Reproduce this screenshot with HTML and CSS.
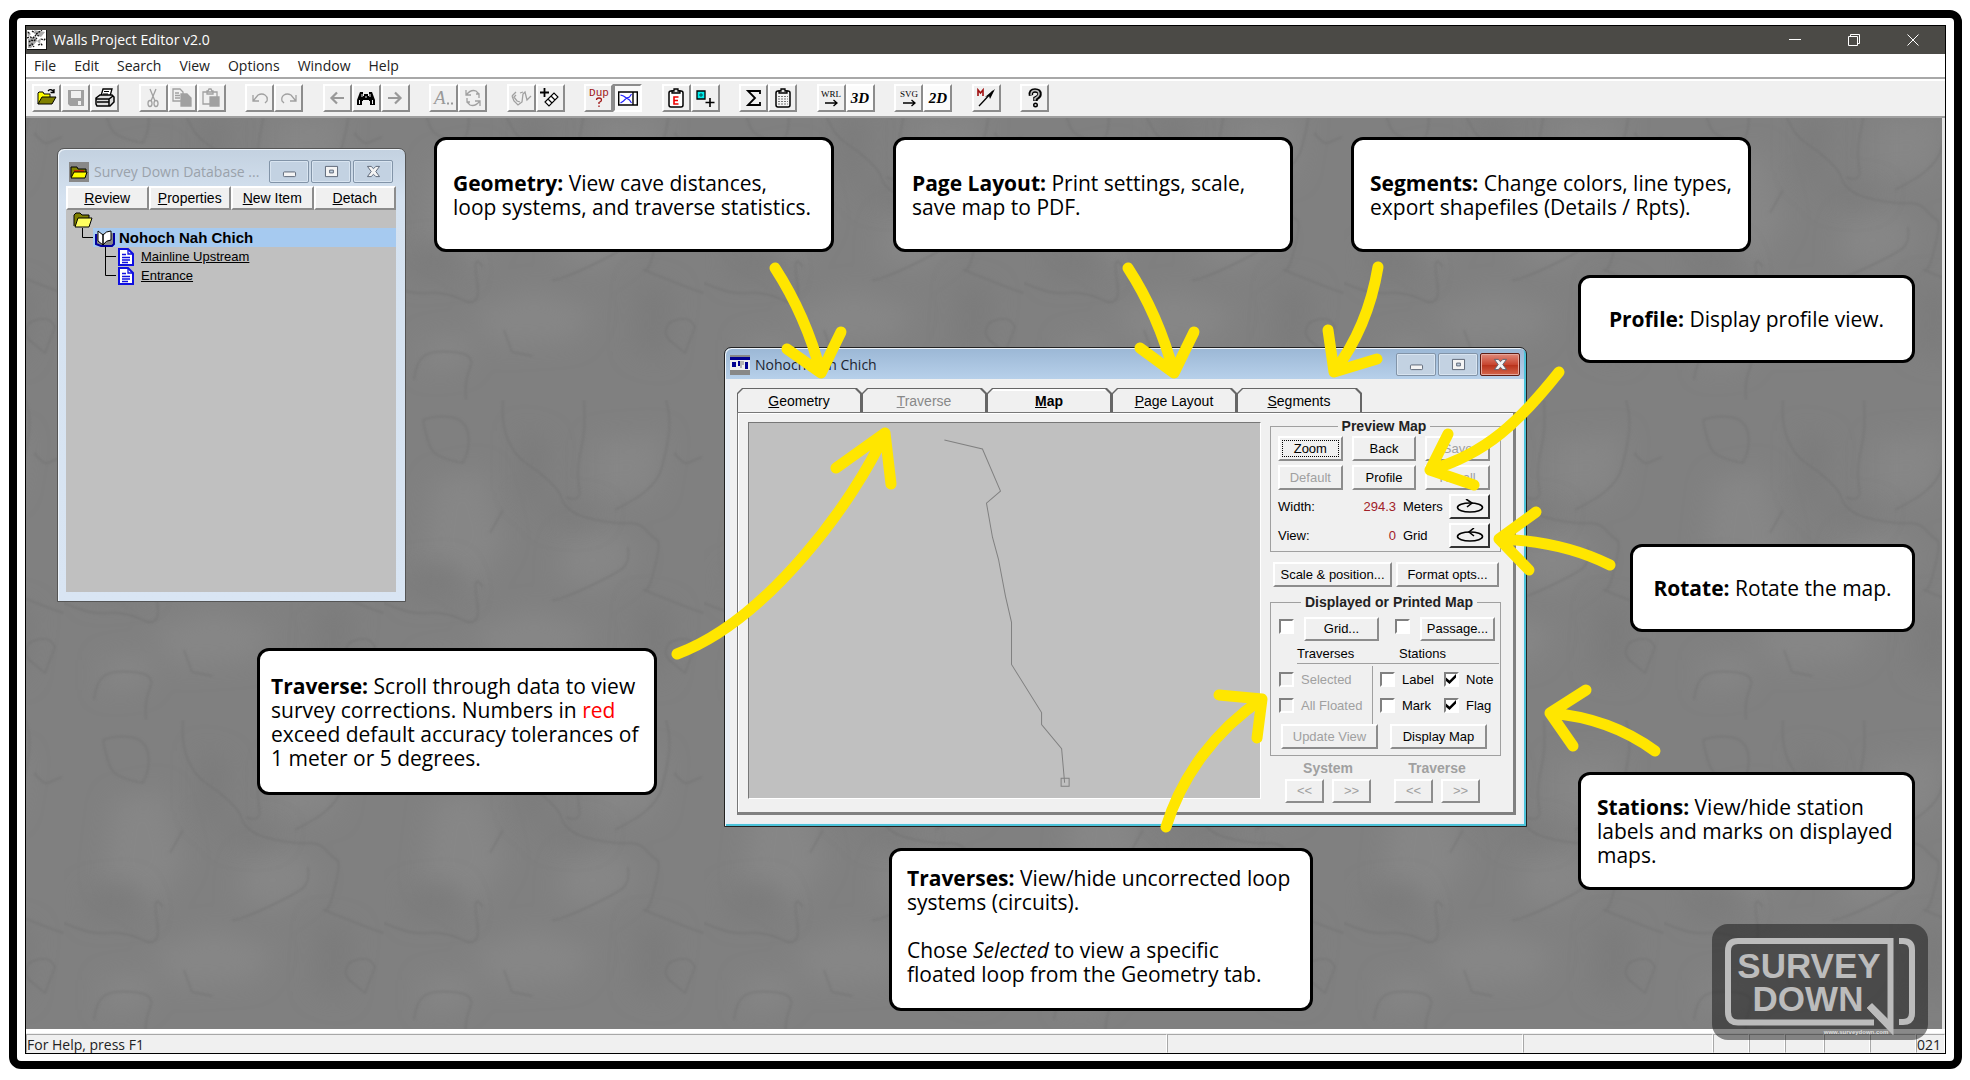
FILE: index.html
```html
<!DOCTYPE html>
<html lang="en">
<head>
<meta charset="utf-8">
<title>Walls Project Editor v2.0</title>
<link rel="stylesheet" href="styles.css">
</head>
<body>
<div class="frame">
<div class="app">
  <header class="titlebar">
    <svg class="app-icon" viewBox="0 0 20 20"><rect width="20" height="20" fill="#fff"/><path d="M0 1l4 3-3 3zM7 0l5 1 6 1-4 5-5-2zM1 9l8-3 1 5-6 7H1zM10 11l4-3-1 6z" fill="#aaa"/><path d="M0 8l3-1 3 1 3-3 3 1M1 2l2 2M5 1l3 2M9 4l6-4M2 12l2-2 3 1 3-3M2 16l3-2 2 3M11 15l3-1 2 2M14 9l3 1 2-2" fill="none" stroke="#111" stroke-width="1.3" stroke-dasharray="2 1"/><path d="M0 19.500h20M19.500 0v20" stroke="#111"/></svg>
    <h1>Walls Project Editor v2.0</h1>
    <div class="sysbuttons">
      <button aria-label="Minimize"><svg viewBox="0 0 12 12"><path d="M0 5.500h12"/></svg></button>
      <button aria-label="Restore"><svg viewBox="0 0 12 12"><path d="M.5 2.500h9v9h-9zM2.500 2.500v-2h9v9h-2"/></svg></button>
      <button aria-label="Close"><svg viewBox="0 0 12 12"><path d="M.5.5l11 11M11.500.5l-11 11"/></svg></button>
    </div>
  </header>

  <nav class="menubar">
    <button>File</button><button>Edit</button><button>Search</button><button>View</button><button>Options</button><button>Window</button><button>Help</button>
  </nav>

  <div class="toolbar">
    <div class="tools">
      <div class="group">
        <button aria-label="Open"><svg viewBox="0 0 20 20"><path d="M1 16V5l1-1h4l1 2h6v3" fill="#ff0" stroke="#000"/><path d="M1 16l4-7h14l-4 7z" fill="#808000" stroke="#000"/><path d="M11 3q3-3 6 1M17 1v3.500h-3.500" fill="none" stroke="#000" stroke-width="1.300"/></svg></button>
        <button aria-label="Save" disabled><svg viewBox="0 0 20 20"><path d="M2 2h16v16H4l-2-2z" fill="#a0a0a0"/><path d="M5 3h10v7H5zM12 13h3v4h-3z" fill="#f0f0f0"/></svg></button>
        <button aria-label="Print"><svg viewBox="0 0 20 20"><path d="M6 8l2-7h9l-2 7z" fill="#fff" stroke="#000" stroke-width="1.300"/><path d="M9 3.500h5M8 6h5" stroke="#000"/><path d="M1 10l4-3h12l2 2v5l-4 4H2l-1-2z" fill="#ddd" stroke="#000" stroke-width="1.500"/><path d="M1 11h13l4-3M2 14h12M14 11v7" fill="none" stroke="#000" stroke-width="1.500"/></svg></button>
      </div>
      <div class="group">
        <button aria-label="Cut" disabled><svg viewBox="0 0 20 20" class="line"><path d="M7 1l5 12M13 1L8 13"/><ellipse cx="7" cy="15.500" rx="2" ry="3"/><ellipse cx="13" cy="15.500" rx="2" ry="3"/></svg></button>
        <button aria-label="Copy" disabled><svg viewBox="0 0 20 20" class="line"><path d="M1 1h7l3 3v9H1zM3 5h4M3 7.500h5M3 10h5"/><path d="M9 6h6l4 4v8H9z" fill="#a0a0a0"/></svg></button>
        <button aria-label="Paste" disabled><svg viewBox="0 0 20 20" class="line"><path d="M9 16H2V4h14v5M6 6V3h1l1-2h2l1 2h1v3z"/><path d="M9 9h9v9H9z" fill="#a0a0a0"/></svg></button>
      </div>
      <div class="group">
        <button aria-label="Undo" disabled><svg viewBox="0 0 20 20" class="line"><path d="M3 7v6h6M3.500 12.500L8 7q4-2 7 0t2 6l-2 2"/></svg></button>
        <button aria-label="Redo" disabled><svg viewBox="0 0 20 20" class="line"><path d="M17 7v6h-6M16.500 12.500L12 7q-4-2-7 0t-2 6l2 2"/></svg></button>
      </div>
      <div class="group">
        <button aria-label="Find previous" disabled><svg viewBox="0 0 20 20"><path d="M17 10H5M10 4.500L4.500 10l5.500 5.500" fill="none" stroke="#999" stroke-width="2.200"/></svg></button>
        <button aria-label="Find"><svg viewBox="0 0 20 20"><path d="M4 4h3v4h1V6h4v2h1V4h3l3 8v5h-5v-4h-1v-1H7v1H6v4H1v-5z" fill="#000"/><path d="M3.500 12v4M6 6v3M14 6v3M16.500 12v4M10 8v2" stroke="#eee"/></svg></button>
        <button aria-label="Find next" disabled><svg viewBox="0 0 20 20"><path d="M3 10h12M10 4.500l5.500 5.500-5.500 5.500" fill="none" stroke="#999" stroke-width="2.200"/></svg></button>
      </div>
      <div class="group">
        <button aria-label="Font" disabled><svg viewBox="0 0 20 20"><text x="0" y="16" class="italic" font-size="19" fill="#999">A</text><path d="M13 15.500h2M17 15.500h2" stroke="#999" stroke-width="2"/></svg></button>
        <button aria-label="Refresh" disabled><svg viewBox="0 0 20 20" class="line"><path d="M3 2v5h5M3.500 6.500Q8 1 13 3l3 3M17 18v-5h-5M16.500 13.500Q12 19 7 17l-3-3M4 10v4h3M16 10V6h-3"/></svg></button>
      </div>
      <div class="group">
        <button aria-label="Traverse line" disabled><svg viewBox="0 0 20 20" class="line"><path d="M1 8l4-4M1 8l2 5 4 4 4-3 1-8 2-2 2 8 4-4M5 7l-2 2 3 4 3 1M9 5l3-1"/></svg></button>
        <button aria-label="Measure"><svg viewBox="0 0 20 20"><path d="M4.500 0v9M0 4.500h9" stroke="#000" stroke-width="1.800"/><path d="M5 14l9-9 4 4-9 9zM8 11l4 4M11 8l4 4" fill="#fff" stroke="#000" stroke-width="1.100"/></svg></button>
      </div>
      <div class="group">
        <button aria-label="Find duplicates"><svg viewBox="0 0 20 20"><text x="10" y="8" text-anchor="middle" class="mono" font-size="11" fill="#a01818">Dup</text><path d="M7.500 12q0-2 2.500-2t2.500 2q0 1.500-2.500 2.500v1.500M10 17.500v1.500" fill="none" stroke="#a01818" stroke-width="1.300"/></svg></button>
        <button aria-label="Map frame" aria-pressed="true" class="pressed"><svg viewBox="0 0 20 20"><path d="M.7 4h18.600v13H.7zM15 4v13" fill="#fff" stroke="#000" stroke-width="1.400"/><path d="M2.500 7l3 1 3 2 3-1 2-3M2.500 15l3-2 3-3 3 2 2 3" fill="none" stroke="#22f" stroke-width="1.200"/></svg></button>
      </div>
      <div class="group">
        <button aria-label="Errors"><svg viewBox="0 0 20 20"><rect x="3" y="3" width="14" height="16" rx="2" fill="#fff" stroke="#000" stroke-width="1.500"/><path d="M6 5V3h2V1h4v2h2v2z" fill="#ddd" stroke="#000" stroke-width="1.300"/><path d="M12.500 9H8v7h4.500M8 12.500h4" fill="none" stroke="#e00" stroke-width="1.600"/></svg></button>
        <button aria-label="Add point"><svg viewBox="0 0 20 20"><path d="M2 3h8v8H2z" fill="#0ee" stroke="#000" stroke-width="1.300"/><path d="M5 6h2v2H5z" fill="none" stroke="#055"/><path d="M15 10v9M10.500 14.500h9" stroke="#000" stroke-width="1.600"/></svg></button>
      </div>
      <div class="group">
        <button aria-label="Statistics"><svg viewBox="0 0 20 20"><path d="M16 6V3H4l7 7-7 7h12v-3" fill="none" stroke="#000" stroke-width="1.800"/></svg></button>
        <button aria-label="Report"><svg viewBox="0 0 20 20"><rect x="3" y="3" width="14" height="16" rx="2" fill="#f4f4f4" stroke="#000" stroke-width="1.500"/><path d="M6 5V3h2V1h4v2h2v2z" fill="#ddd" stroke="#000" stroke-width="1.300"/><path d="M5 8.500h10M5 11h10M5 13.500h10M5 16h10" stroke="#777" stroke-dasharray="2 1"/></svg></button>
      </div>
      <div class="group">
        <button aria-label="Export WRL"><svg viewBox="0 0 20 20"><text x="10" y="9" text-anchor="middle" class="roman" font-size="9">WRL</text><path d="M4 15h12M12.500 12l3.500 3-3.500 3" fill="none" stroke="#000" stroke-width="1.300"/></svg></button>
        <button aria-label="View 3D" class="white"><svg viewBox="0 0 20 20"><text x="10" y="15" text-anchor="middle" class="serif" font-size="15">3D</text></svg></button>
      </div>
      <div class="group">
        <button aria-label="Export SVG"><svg viewBox="0 0 20 20"><text x="10" y="9" text-anchor="middle" class="roman" font-size="9">SVG</text><path d="M4 15h12M12.500 12l3.500 3-3.500 3" fill="none" stroke="#000" stroke-width="1.300"/></svg></button>
        <button aria-label="View 2D" class="white"><svg viewBox="0 0 20 20"><text x="10" y="15" text-anchor="middle" class="serif" font-size="15">2D</text></svg></button>
      </div>
      <div class="group">
        <button aria-label="Magnetic declination"><svg viewBox="0 0 20 20"><path d="M2 8V2l2.500 3L7 2v6" fill="none" stroke="#a01010" stroke-width="1.600"/><path d="M3 18L17 3" stroke="#000" stroke-width="1.300"/><path d="M19 1l-5 10-1-3-4 1z" fill="#000"/></svg></button>
      </div>
      <div class="group">
        <button aria-label="Help"><svg viewBox="0 0 20 20"><path d="M6 7.500q-1-5 4-5t4.500 4q0 2-4 4v2.500" fill="none" stroke="#000" stroke-width="4.500"/><path d="M6 7q0-4.500 4-4.500t4 3.500q0 2-4 4.500v2" fill="none" stroke="#bbb" stroke-width="1.600"/><circle cx="10.500" cy="17" r="1.800" fill="#ccc" stroke="#000" stroke-width="1.400"/></svg></button>
      </div>
    </div>
  </div>

  <main class="desktop">
    <svg class="texture" aria-hidden="true">
      <defs>
        <filter id="soft"><feGaussianBlur stdDeviation="1"/></filter>
        <filter id="cloud" x="-50%" y="-50%" width="200%" height="200%"><feGaussianBlur stdDeviation="12"/></filter>
        <pattern id="marble" patternUnits="userSpaceOnUse" x="38" y="-38" width="320" height="320">
          <rect width="320" height="320" fill="#808080"/>
          <g fill="#868686" filter="url(#cloud)">
            <path d="M50 80l50-10 20 70-30 50-50-30zM210 40l70-5-10 60-60 5zM90 230l60-20 60 20-20 30-80 5zM180 140l50-10 25 30-40 30-40-10zM40 260l50-5-10 30-40 5z"/>
          </g>
          <g fill="#7c7c7c" filter="url(#cloud)">
            <path d="M20 170l50-5 15 30-60 5zM135 30l30 10-10 70-20-20zM255 200l35 10-10 70-30-10zM160 100l60 10-20 15-40-5z"/>
          </g>
          <g fill="none" stroke="#707070" stroke-width="2" stroke-linejoin="round" filter="url(#soft)" opacity=".5">
            <path d="M39 20q4 22 9 30t31 13q8-16 5-30t-18-16-27 3"/>
            <path d="M119 0q-2 24 5 40t18 23 22 17 13 17 9 13 27 10 31 3 18 7 11 10-2 27-11 23 25 10 35 13"/>
            <path d="M200 0q2 30-3 50t-2 37-13 10"/>
            <path d="M0 203q26 12 43 10t36 7 14-20 6-13M106 133l13-23M282 0q5 18 3 33t-7 34-29 33-14 7"/>
            <path d="M244 147q2 14-4 20t-36 20-36 13M290 53q10 12 14 10t14-6"/>
            <path d="M289 263q-12-8-4-20 20-10 26 4l-10 26zM30 300q2-18 10-24t30-4 16 16-4 32M120 250l8 22 20 4"/>
          </g>
        </pattern>
      </defs>
      <rect width="100%" height="100%" fill="url(#marble)"/>
    </svg>

    <section class="window database" aria-label="Survey Down Database">
      <div class="caption">
        <svg class="win-icon" viewBox="0 0 20 20"><rect width="20" height="20" fill="#888"/><path d="M2 15V5h6l1 2h8v3" fill="#808000" stroke="#000"/><path d="M5 8h10v2H5z" fill="#c03000"/><path d="M2 16l3-6h13l-2 6z" fill="#ff0" stroke="#000"/></svg>
        <h2>Survey Down Database ...</h2>
        <div class="winbuttons">
          <button aria-label="Minimize"><svg viewBox="0 0 16 14"><rect x="1.500" y="7.500" width="13" height="5" rx="1"/></svg></button>
          <button aria-label="Maximize"><svg viewBox="0 0 16 14"><path fill-rule="evenodd" d="M1.500 1.500h13v11h-13zM6 5.500v3h4v-3z"/></svg></button>
          <button aria-label="Close"><svg viewBox="0 0 16 14"><path d="M1.500 1.500H5.500L8 4l2.500-2.500h4L10.500 7l4 5.500h-4L8 10l-2.500 2.500h-4L5.500 7z"/></svg></button>
        </div>
      </div>
      <div class="actions">
        <button><u>R</u>eview</button><button><u>P</u>roperties</button><button><u>N</u>ew Item</button><button><u>D</u>etach</button>
      </div>
      <div class="tree">
        <div class="row root"><svg class="folder" viewBox="0 0 20 16"><path d="M1 14V3l2-2h4l2 2h7v4" fill="#808000" stroke="#000"/><path d="M2 15L5 6h14l-3 9z" fill="#ffff60" stroke="#000"/></svg></div>
        <div class="row book">
          <svg class="elbow" viewBox="0 0 11 19"><path d="M.5 0v9.500H11"/></svg>
          <div class="selected"><svg viewBox="0 0 20 18"><path d="M1 5v10l5 2h11l2-2V4" fill="#888" stroke="#0000a0" stroke-width="2"/><path d="M3 2l5 4v10l-5-4zM8 6q3-4 8-4v9q-5 0-8 5z" fill="#fff" stroke="#000"/></svg><strong>Nohoch Nah Chich</strong></div>
        </div>
        <div class="row leaf"><svg class="elbow" viewBox="0 0 11 19"><path d="M.5 0v19M0 9.500h11"/></svg><svg class="doc" viewBox="0 0 16 18"><path d="M1 1h9l5 5v11H1z" fill="#fff" stroke="#1010e0" stroke-width="2"/><path d="M10 1v5h5M4 6.500h4M4 9.500h8M4 12h8M4 14.500h6" fill="none" stroke="#1010e0" stroke-width="1.300"/></svg><a href="#">Mainline Upstream</a></div>
        <div class="row leaf"><svg class="elbow" viewBox="0 0 11 19"><path d="M.5 0v9.500H11"/></svg><svg class="doc" viewBox="0 0 16 18"><path d="M1 1h9l5 5v11H1z" fill="#fff" stroke="#1010e0" stroke-width="2"/><path d="M10 1v5h5M4 6.500h4M4 9.500h8M4 12h8M4 14.500h6" fill="none" stroke="#1010e0" stroke-width="1.300"/></svg><a href="#">Entrance</a></div>
      </div>
    </section>

    <section class="window review" aria-label="Nohoch Nah Chich">
      <div class="caption">
        <svg class="win-icon" viewBox="0 0 20 20"><rect width="20" height="20" fill="#eee"/><path d="M0 0h20v2H0zM0 15h20v5H0z" fill="#888"/><path d="M0 2h20v3H0zM2 7h4v5H2zM8 6h2v5H8zM15 7h3v7h-3z" fill="#000090"/><path d="M11 6v7M13 6v4" stroke="#777"/></svg>
        <h2>Nohoch Nah Chich</h2>
        <div class="winbuttons">
          <button aria-label="Minimize"><svg viewBox="0 0 16 14"><rect x="1.500" y="7.500" width="13" height="5" rx="1"/></svg></button>
          <button aria-label="Maximize"><svg viewBox="0 0 16 14"><path fill-rule="evenodd" d="M1.500 1.500h13v11h-13zM6 5.500v3h4v-3z"/></svg></button>
          <button aria-label="Close" class="close"><svg viewBox="0 0 16 14"><path d="M1.500 1.500H5.500L8 4l2.500-2.500h4L10.500 7l4 5.500h-4L8 10l-2.500 2.500h-4L5.500 7z"/></svg></button>
        </div>
      </div>
      <div class="client">
        <div class="tabs" role="tablist">
          <button role="tab"><span><u>G</u>eometry</span></button>
          <button role="tab" disabled><span><u>T</u>raverse</span></button>
          <button role="tab" aria-selected="true" class="active"><span><u>M</u>ap</span></button>
          <button role="tab"><span><u>P</u>age Layout</span></button>
          <button role="tab"><span><u>S</u>egments</span></button>
        </div>
        <div class="panel">
          <div class="map">
            <svg viewBox="0 0 510 374" preserveAspectRatio="xMinYMin"><path d="M195 17l38 9 18 42-14 12 6 34 6 22 7 37 6 26v42l30 48v12l20 24 3 34M311.500 354.500h8v8h-8z" fill="none" stroke="#808080"/></svg>
          </div>
          <div class="side">
            <fieldset class="preview">
              <legend>Preview Map</legend>
              <div class="three">
                <button class="focus">Zoom</button><button>Back</button><button disabled>Save</button>
                <button disabled>Default</button><button>Profile</button><button disabled>Recall</button>
              </div>
              <div class="measure"><span>Width:</span><output>294.3</output><span>Meters</span>
                <button aria-label="Rotate clockwise"><svg viewBox="0 0 28 16"><ellipse cx="14" cy="8.500" rx="12.500" ry="4.500"/><path d="M10 0l6 4-5 4"/></svg></button></div>
              <div class="measure"><span>View:</span><output>0</output><span>Grid</span>
                <button aria-label="Rotate counterclockwise"><svg viewBox="0 0 28 16"><ellipse cx="14" cy="8.500" rx="12.500" ry="4.500"/><path d="M18 0l-5 4 5 4"/></svg></button></div>
            </fieldset>
            <div class="options"><button>Scale &amp; position...</button><button>Format opts...</button></div>
            <fieldset class="printed">
              <legend>Displayed or Printed Map</legend>
              <div class="items">
                <input type="checkbox" aria-label="Show grid"><button>Grid...</button>
                <input type="checkbox" aria-label="Show passage"><button>Passage...</button>
              </div>
              <div class="heads"><span>Traverses</span><span>Stations</span></div>
              <div class="checks">
                <div class="floats">
                  <label><input type="checkbox" disabled>Selected</label>
                  <label><input type="checkbox" disabled>All Floated</label>
                </div>
                <div class="stations">
                  <label><input type="checkbox">Label</label><label><input type="checkbox" checked>Note</label>
                  <label><input type="checkbox">Mark</label><label><input type="checkbox" checked>Flag</label>
                </div>
              </div>
              <div class="commit"><button disabled>Update View</button><button>Display Map</button></div>
            </fieldset>
            <div class="steppers">
              <div><strong>System</strong><button disabled>&lt;&lt;</button><button disabled>&gt;&gt;</button></div>
              <div><strong>Traverse</strong><button disabled>&lt;&lt;</button><button disabled>&gt;&gt;</button></div>
            </div>
          </div>
        </div>
      </div>
    </section>

    <svg class="arrows" viewBox="26 118 1918 912" aria-hidden="true">
      <path d="M775 268Q806 316 821 373M787 349L821 373L841 332"/>
      <path d="M1128 268Q1158 314 1174 373M1140 348L1174 373L1194 332"/>
      <path d="M1378 267Q1368 327 1334 372M1328 330L1334 372L1377 359"/>
      <path d="M1559 372C1520 421 1486 454 1430 470M1448 434L1430 470L1474 485"/>
      <path d="M1610 565Q1562 541 1499 539M1536 512L1499 539L1529 570"/>
      <path d="M677 654C768 620 855 500 885 433M836 468L885 433L891 484"/>
      <path d="M1166 827C1182 775 1216 730 1262 699M1219 695L1262 699L1257 738"/>
      <path d="M1655 751Q1610 718 1550 713M1586 690L1550 713L1573 746"/>
    </svg>

    <aside class="note geometry"><p><b>Geometry:</b> View cave distances,<br>loop systems, and traverse statistics.</p></aside>
    <aside class="note layout"><p><b>Page Layout:</b> Print settings, scale,<br>save map to PDF.</p></aside>
    <aside class="note segments"><p><b>Segments:</b> Change colors, line types,<br>export shapefiles (Details / Rpts).</p></aside>
    <aside class="note profile"><p><b>Profile:</b> Display profile view.</p></aside>
    <aside class="note rotate"><p><b>Rotate:</b> Rotate the map.</p></aside>
    <aside class="note traverse"><p><b>Traverse:</b> Scroll through data to view<br>survey corrections. Numbers in <span class="red">red</span><br>exceed default accuracy tolerances of<br>1 meter or 5 degrees.</p></aside>
    <aside class="note traverses"><p><b>Traverses:</b> View/hide uncorrected loop<br>systems (circuits).</p><p>Chose <i>Selected</i> to view a specific<br>floated loop from the Geometry tab.</p></aside>
    <aside class="note stations-note"><p><b>Stations:</b> View/hide station<br>labels and marks on displayed<br>maps.</p></aside>
  </main>

  <footer class="statusbar">
    <span class="hint">For Help, press F1</span><span class="c1"></span><span class="c2"></span><span class="c3"></span><span class="c3"></span><span class="c4"></span><span class="c5"></span><span class="c5"></span><span class="c6">021</span>
  </footer>

  <svg class="logo" viewBox="0 0 216 116" role="img" aria-label="Survey Down">
    <rect width="216" height="116" rx="16" fill="#141414" fill-opacity=".5"/>
    <g fill="none" stroke="#bcbcbc" stroke-width="6">
      <path d="M162 98.500H26Q16 98.500 16 88V27Q16 17 26 17H178.500V104L157 82"/>
      <path d="M187 17h4q9 0 9 9v63q0 9-9 9h-4"/>
    </g>
    <path d="M155 84l5-5 21 21v11z" fill="#bcbcbc"/>
    <g fill="#bcbcbc" class="logotype"><text x="97" y="54" text-anchor="middle">SURVEY</text><text x="96" y="87" text-anchor="middle">DOWN</text></g>
    <text x="144" y="110" text-anchor="middle" class="site">www.surveydown.com</text>
  </svg>
</div>
</div>
</body>
</html>
```
FILE: styles.css
```css
* { box-sizing: border-box; }

body {
  margin: 0;
  min-height: 100vh;
  padding: 10px 8px 11px 9px;
  display: flex;
  background: #fff;
  color: #000;
  font: 14px/16px "Liberation Sans", Arial, sans-serif;
}

button, input { font: inherit; color: inherit; margin: 0; }
button { padding: 0; white-space: nowrap; }
h1, h2, p { margin: 0; font-weight: normal; }
svg { display: block; flex: none; }

.frame {
  flex: 1;
  display: flex;
  border: 8px solid #000;
  border-radius: 12px;
  padding: 7px 8px;
}

.app {
  position: relative;
  flex: 1;
  display: flex;
  flex-direction: column;
  border: 1px solid #000;
  background: #f0f0f0;
  overflow: hidden;
}

/* Main title bar, menu and toolbar */
.titlebar {
  display: flex;
  align-items: center;
  height: 28px;
  background: #4b4a46;
  color: #fff;
}
.app-icon { width: 20px; height: 20px; margin: 0 6px 0 1px; }
.titlebar h1 { flex: 1; font: 14px/20px "Open Sans", "Noto Sans", sans-serif; }
.sysbuttons { display: flex; padding-right: 3px; }
.sysbuttons button {
  display: flex;
  align-items: center;
  justify-content: center;
  width: 59px;
  height: 28px;
  border: 0;
  background: none;
}
.sysbuttons svg { width: 12px; height: 12px; fill: none; stroke: #fff; }

.menubar {
  display: flex;
  gap: 18px;
  height: 23px;
  padding-left: 8px;
  background: #fff;
}
.menubar button {
  border: 0;
  background: none;
  color: #222;
  font: 14px/24px "Open Sans", "Noto Sans", sans-serif;
}

.toolbar {
  height: 41px;
  padding: 5px 6px;
  border-top: 2px solid #a8a8a8;
  border-bottom: 2px solid #a0a0a0;
  box-shadow: inset 0 2px #fff;
}
.tools { display: flex; justify-content: space-between; width: 1017px; }
.group { display: flex; }
.tools button {
  display: flex;
  align-items: center;
  justify-content: center;
  width: 29px;
  height: 28px;
  border: 2px solid;
  border-color: #fff #8c8c8c #8c8c8c #fff;
  background: #f0f0f0;
}
.tools button.pressed { border-color: #8c8c8c #fff #fff #8c8c8c; background: #f8f8f8; }
.tools button.white { background: #fcfcfc; }
.tools svg { width: 20px; height: 20px; overflow: visible; }
.line { fill: none; stroke: #a0a0a0; stroke-width: 1.3; }
.serif { font-family: "Liberation Serif", serif; font-style: italic; font-weight: bold; }
.italic { font-family: "Liberation Serif", serif; font-style: italic; }
.roman { font-family: "Liberation Serif", serif; }
.mono { font-family: "Liberation Mono", monospace; }

/* Workspace */
.desktop {
  position: relative;
  flex: 1;
  min-height: 840px;
  border-right: 3px solid #e4e4e4;
  background: #808080;
  overflow: hidden;
}
.texture { position: absolute; inset: 0; width: 100%; height: 100%; }

.window {
  position: absolute;
  display: flex;
  flex-direction: column;
  border: 1px solid #555;
  border-radius: 7px 7px 0 0;
}
.database {
  left: 31px;
  top: 30px;
  width: 349px;
  height: 454px;
  padding: 0 9px 9px 8px;
  background: linear-gradient(#c3d1e0, #d5e2f0 50px, #d9e5f3);
  box-shadow: inset 1px 1px #eef4fa;
}
.review {
  left: 698px;
  top: 229px;
  width: 803px;
  height: 480px;
  border-color: #222;
  background: linear-gradient(#9bb7d5, #b7d0ea 31px, #e8eef6 31px);
  box-shadow: inset 1px 1px #eef4fa, inset -2px -2px #4cc3d9;
}

.caption { display: flex; flex: none; align-items: center; }
.caption h2 { flex: 1; font: 14px/20px "Open Sans", "Noto Sans", sans-serif; white-space: nowrap; }
.database .caption { height: 37px; padding: 8px 3px 0 3px; }
.database h2 { color: #9aa2ab; }
.review .caption { height: 31px; padding: 2px 6px 0 5px; }
.review h2 { color: #1c2430; }
.win-icon { width: 20px; height: 20px; margin-right: 5px; }

.winbuttons { display: flex; gap: 2px; }
.winbuttons button {
  display: flex;
  align-items: center;
  justify-content: center;
  width: 40px;
  height: 23px;
  border: 1px solid #8294a8;
  border-radius: 2px;
  background: #c3d2e2;
  box-shadow: inset 0 0 0 1px #d8e4f0;
}
.winbuttons svg { width: 15px; height: 13px; fill: #f4f4f4; stroke: #596273; }
.winbuttons .close { border-color: #5e1d14; background: linear-gradient(#e0897a, #c84731 50%, #b8311a 52%, #d4664c); box-shadow: inset 0 0 0 1px #e5a79c; }

/* Raised controls */
.actions button, .side button {
  border: 2px solid;
  border-color: #fff #8c8c8c #8c8c8c #fff;
  background: #f0f0f0;
}
.side button:disabled, .side strong, label:has(:disabled) { color: #a0a0a0; }

.actions { display: flex; height: 24px; }
.actions button { flex: 1; line-height: 18px; }

.tree { flex: 1; padding: 1px 0 0 16px; background: #c0c0c0; }
.row { display: flex; height: 19px; align-items: center; }
.root { height: 17px; margin-left: -9px; }
.folder { width: 20px; height: 16px; }
.selected { display: flex; flex: 1; align-items: center; gap: 4px; height: 19px; padding-left: 2px; background: #a6caf0; }
.selected svg { width: 20px; height: 18px; }
.selected strong { font-size: 15px; }
.leaf { padding-left: 23px; }
.elbow { width: 11px; height: 19px; fill: none; stroke: #000; }
.doc { width: 16px; height: 18px; margin: 0 7px 0 2px; }
.tree a { color: #000; font-size: 13px; }

/* Review window */
.client {
  flex: 1;
  display: flex;
  flex-direction: column;
  margin: 0 4px 3px 5px;
  padding: 9px 6px 8px 7px;
  background: #f0f0f0;
}
.tabs { display: flex; flex: none; height: 24px; }
.tabs button {
  width: 125px;
  border: 0;
  background: #666;
  clip-path: polygon(0 100%, 0 5px, 5px 0, 120px 0, 100% 5px, 100% 100%);
  padding: 1px 2px 0 1px;
}
.tabs span {
  display: block;
  height: 23px;
  background: #f0f0f0;
  clip-path: polygon(0 100%, 0 5px, 5px 0, 117px 0, 100% 5px, 100% 100%);
  line-height: 24px;
}
.tabs button:disabled { color: #888; }
.tabs .active { font-weight: bold; }
.tabs .active span { background: linear-gradient(#fff 2px, #f0f0f0 2px); }

.panel {
  flex: 1;
  display: flex;
  align-items: flex-start;
  gap: 9px;
  padding: 9px 12px 6px 10px;
  border: 1px solid;
  border-color: #777 #808080 #808080 #777;
  border-width: 1px 3px 3px 1px;
  box-shadow: inset 1px 1px #fff;
}
.map {
  flex: 1;
  min-width: 0;
  height: 377px;
  border: 1px solid;
  border-color: #777 #fff #fff #777;
  background: #c0c0c0;
}
.map svg { width: 100%; height: 100%; }

.side { width: 231px; font-size: 13px; margin-top: -4px; }
fieldset { min-width: 0; margin: 0; border: 1px solid #a0a0a0; }
legend { margin: 0 auto; padding: 0 4px; font-size: 14px; line-height: 16px; font-weight: bold; color: #222; }
.preview { padding: 2px 10px 3px 7px; }
.three { display: grid; grid-template-columns: repeat(3, 1fr); gap: 4px 9px; }
.three button, .measure button, .options button { height: 25px; }
.side .focus { outline: 1px dotted #000; outline-offset: -5px; }
.measure { display: grid; grid-template-columns: 1fr auto 46px 41px; align-items: center; margin-top: 4px; }
.measure output { margin-right: 7px; color: #a02028; }
.side .measure button { display: flex; align-items: center; justify-content: center; border-color: #fff #333 #333 #fff; }
.measure svg { width: 28px; height: 16px; fill: none; stroke: #000; stroke-width: 1.6; }

.options { display: flex; gap: 4px; padding: 0 2px 0 3px; margin: 10px 0 7px; }
.options button:first-child { width: 119px; }
.options button:last-child { flex: 1; }

.printed { padding: 7px 1px 6px 8px; }
.items { display: flex; }
.items input { margin: 2px 10px 0 0; }
.items button { flex: none; width: 75px; height: 24px; margin-right: 16px; }
.items button:last-child { margin-right: 0; }
.heads { display: grid; grid-template-columns: 102px 1fr; margin: 5px 0 0 18px; padding-bottom: 1px; border-bottom: 1px solid #a0a0a0; }
.checks { display: flex; margin-top: 2px; }
.floats { width: 94px; padding-top: 6px; border-right: 1px solid #a0a0a0; }
.stations { display: grid; grid-template-columns: 64px 1fr; flex: 1; padding: 6px 0 0 7px; }
label { display: flex; gap: 7px; height: 26px; line-height: 16px; white-space: nowrap; }
.floats label:last-child { height: 16px; }
.commit { display: flex; gap: 12px; margin: 0 0 0 2px; }
.commit button { width: 97px; height: 25px; }

input[type="checkbox"] {
  appearance: none;
  flex: none;
  width: 15px;
  height: 15px;
  border: 2px solid;
  border-color: #808080 #fff #fff #808080;
  background: #fff;
}
input[type="checkbox"]:disabled { background: #f0f0f0; }
input[type="checkbox"]:checked::before {
  content: "";
  display: block;
  width: 10px;
  height: 10px;
  background: #000;
  clip-path: polygon(0 35%, 35% 65%, 100% 0, 100% 35%, 35% 100%, 0 70%);
}

.steppers { display: flex; gap: 23px; padding-left: 15px; margin-top: 4px; }
.steppers div { display: grid; grid-template-columns: 39px 39px; gap: 3px 8px; }
.steppers strong { grid-column: 1 / 3; text-align: center; font-size: 14px; }
.steppers button { height: 24px; line-height: 16px; }

/* Annotations */
.arrows {
  position: absolute;
  left: 0;
  top: 0;
  width: 1918px;
  height: 912px;
  fill: none;
  stroke: #ffe600;
  stroke-width: 11;
  stroke-linecap: round;
  stroke-linejoin: round;
}
.note {
  position: absolute;
  display: flex;
  flex-direction: column;
  justify-content: center;
  gap: 24px;
  border: 3px solid #000;
  border-radius: 12px;
  padding-left: 16px;
  background: #fff;
  font: 21px/24px "Open Sans", "Noto Sans", sans-serif;
  white-space: nowrap;
}
.geometry, .layout, .segments { top: 19px; width: 400px; height: 115px; }
.geometry { left: 408px; }
.layout { left: 867px; }
.segments { left: 1325px; }
.profile { left: 1552px; top: 157px; width: 337px; height: 88px; align-items: center; padding: 0; }
.rotate { left: 1604px; top: 426px; width: 285px; height: 88px; align-items: center; padding: 0; }
.traverse { left: 231px; top: 530px; width: 400px; height: 147px; padding-left: 11px; }
.traverses { left: 863px; top: 730px; width: 424px; height: 163px; padding: 0 0 8px 15px; }
.stations-note { left: 1552px; top: 654px; width: 337px; height: 118px; }
.red { color: #f00; }

/* Status bar */
.statusbar {
  display: flex;
  height: 24px;
  padding-top: 5px;
  background: linear-gradient(#fff 4px, #f0f0f0 4px);
  font: 14px/20px "Open Sans", "Noto Sans", sans-serif;
  color: #222;
}
.statusbar span { border: 1px solid; border-color: #a8a8a8 #fff #f0f0f0 #a8a8a8; }
.hint { flex: 1; }
.c1 { width: 356px; }
.c2 { width: 190px; }
.c3 { width: 36px; }
.c4 { width: 39px; }
.c5 { width: 46px; }
.c6 { width: 29px; }

.logo { position: absolute; right: 17px; bottom: 13px; width: 216px; height: 116px; }
.logotype { font: bold 35px "Liberation Sans", Arial, sans-serif; }
.site { font: bold 6px "Liberation Sans", Arial, sans-serif; fill: #ddd; }
```
